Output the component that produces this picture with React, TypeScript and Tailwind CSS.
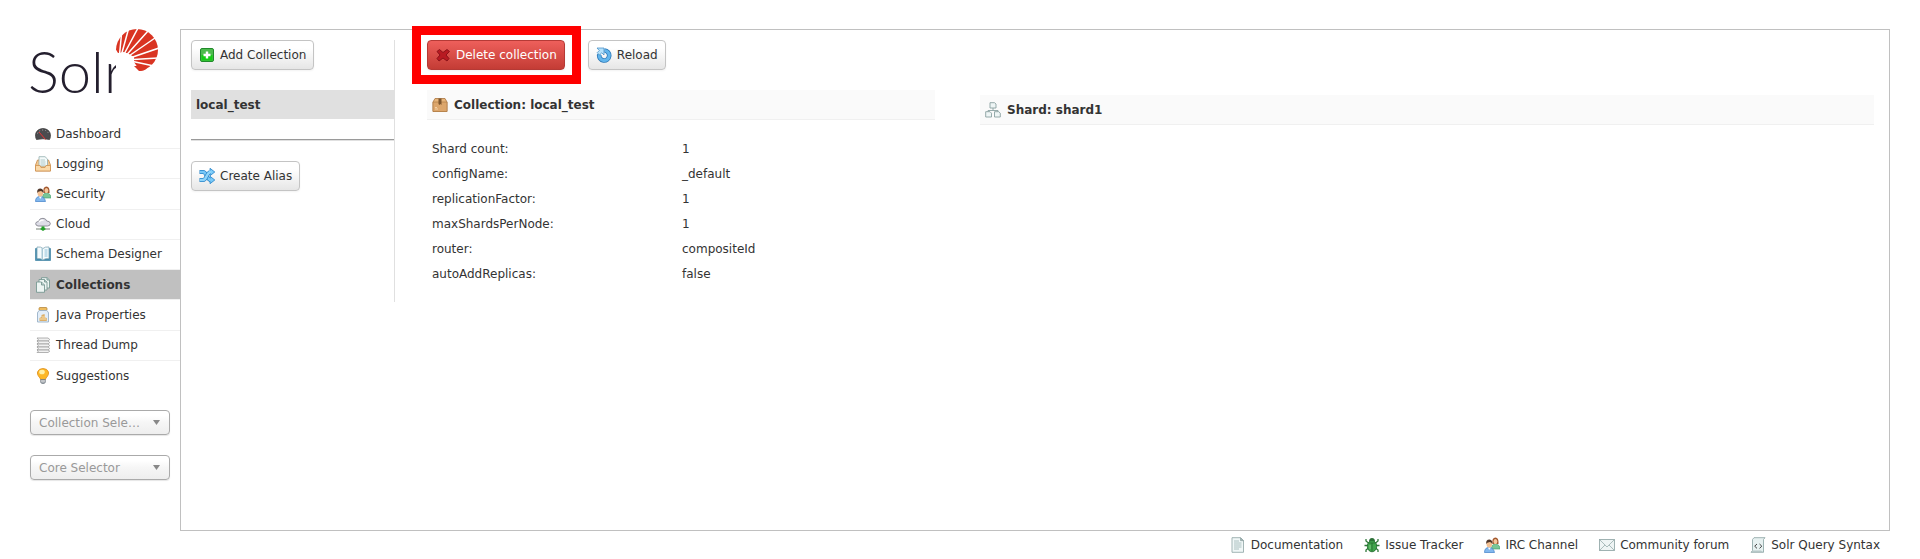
import React from "react";

type IconName =
  | "dashboard" | "logging" | "users" | "cloud" | "book" | "pages" | "jar" | "stack" | "bulb"
  | "plus" | "shuffle" | "cross" | "reload" | "box" | "nodes" | "doc" | "bug" | "mail" | "script";

const shapes: Record<IconName, React.ReactNode> = {
  dashboard: (
    <>
      <path d="M1.5 13.5C-.5 10 0 3 8 2.500C16 3 16.500 10 14.500 13.500Q8 12 1.500 13.500Z" fill="#4b4b4e" stroke="#333" strokeWidth=".7" />
      <path d="M2.500 7.500Q4 4 8 4T13.500 7.500" fill="none" stroke="#aaa" strokeWidth="1" strokeDasharray="1 2" />
      <path d="M4 6L10.500 13.500" stroke="#e33" strokeWidth="1" />
    </>
  ),
  logging: (
    <>
      <path d="M.500 9L2.500 4H13.500L15.500 9V15H.500Z" fill="#f3c78d" stroke="#c98c4c" strokeWidth=".8" />
      <path d="M4 .700H10L12.500 3V10H4Z" fill="#f4fafa" stroke="#92adad" strokeWidth=".8" />
      <path d="M5.500 4H10M5.500 6H10.500M5.500 8H10.500" stroke="#9fbcbc" strokeWidth=".8" />
      <path d="M.500 9.500H5L6 11.500H10L11 9.500H15.500V15H.500Z" fill="#fbd9a8" stroke="#cf9250" strokeWidth=".8" />
    </>
  ),
  users: (
    <>
      <path d="M7.500 12Q7.500 7 11.500 7Q16 7.500 16 12Z" fill="#79c698" stroke="#3d9c66" strokeWidth=".6" />
      <path d="M8.500 7Q7.500 .500 11.500 .500Q15 .500 14.500 7Z" fill="#a3582f" />
      <ellipse cx="11.400" cy="4.600" rx="1.900" ry="2.600" fill="#f6c79c" />
      <path d="M.500 15.500Q.500 10.500 5 10.500T10.500 15.500Z" fill="#82b8ee" stroke="#3f7fc9" strokeWidth=".7" />
      <path d="M4 10.500L5.200 13L6.800 10.500" fill="#fff" />
      <ellipse cx="5.300" cy="7" rx="2.800" ry="3.500" fill="#f4c092" />
      <path d="M2.300 7Q1.500 2.500 5.500 2.500Q9 3 8.300 7Q7 4.700 5 5.200Q3 5.500 2.300 7Z" fill="#4e3528" />
    </>
  ),
  cloud: (
    <>
      <path d="M3 10Q.500 9.500 .700 7.500Q1 5.500 3.500 5.500Q4.500 2 8 2.300Q11 2.500 11.700 5Q15 5 15.300 7.500Q15.300 10 12.500 10Z" fill="#dedee8" stroke="#85858f" strokeWidth=".9" />
      <path d="M4 6Q6 3.500 8.500 4.500" stroke="#fff" strokeWidth="1.300" fill="none" />
      <path d="M8 10V12M1 13H15" stroke="#a3aca3" strokeWidth="1.300" />
      <path d="M6.500 10.500H9.500V12L11 13L8 15L5 13L6.500 12Z" fill="#24a12a" />
    </>
  ),
  book: (
    <>
      <path d="M.500 2.500H2V13H14V2.500H15.500V14.500H.500Z" fill="#4b93b7" stroke="#2d7699" strokeWidth=".6" />
      <path d="M2 1Q6 .500 8 2.500Q10 .500 14 1V12.500Q10 12 8 14Q6 12 2 12.500Z" fill="#f5fbfd" stroke="#7fa6b5" strokeWidth=".8" />
      <path d="M6.500 2L8 3V13.500L6.500 12.500Z" fill="#a8c8d6" />
      <path d="M9.500 4H12.500M9.500 6H12.500M9.500 8H12.500M9.500 10H12.500" stroke="#8cc0d9" strokeWidth="1" />
    </>
  ),
  pages: (
    <g fill="#edf5f3" stroke="#789993" strokeWidth=".9">
      <path d="M6.500 .700H12L14.500 3V11H6.500Z" />
      <path d="M4 2.500H9.500L12 5V13H4Z" />
      <path d="M1.500 5H6.500L9.500 8V15.300H1.500Z" />
      <path d="M6.500 5V8H9.500M9.500 2.500V5H12M12 .700V3H14.500" fill="#b9cfcb" />
    </g>
  ),
  jar: (
    <>
      <rect x="4" y=".500" width="8" height="3" rx="1" fill="#eebc5e" stroke="#ad7d30" strokeWidth=".7" />
      <path d="M4.500 3.500H11.500Q13.500 4.500 13.500 6V15H2.500V6Q2.500 4.500 4.500 3.500Z" fill="#e3eef9" stroke="#98b1c7" strokeWidth=".9" />
      <path d="M4.500 14V11L6.500 10V8L9.500 7L10 10.500L11.800 11V14Z" fill="#dcae67" />
      <path d="M5 12H11M7 10H10" stroke="#fae0ad" strokeWidth="1" />
    </>
  ),
  stack: (
    <g fill="#f1f1f1" stroke="#a0a0a0" strokeWidth=".8">
      <path d="M2 1H13L14.800 2.500L13 4H2L3.300 2.500Z" />
      <path d="M2 4H13L14.800 5.500L13 7H2L3.300 5.500Z" />
      <path d="M2 7H13L14.800 8.500L13 10H2L3.300 8.500Z" />
      <path d="M2 10H13L14.800 11.500L13 13H2L3.300 11.500Z" />
      <path d="M2 13H13L14.800 14.200L13 15.500H2L3.300 14.200Z" />
    </g>
  ),
  bulb: (
    <>
      <path d="M5.500 11.500Q5.500 10 3.700 8.500Q2 6.500 2.500 4Q3.700 .500 8 .500T13.500 4Q14 6.500 12.300 8.500Q10.500 10 10.500 11.500Z" fill="#fdb827" stroke="#dd8b17" strokeWidth=".8" />
      <ellipse cx="7" cy="4" rx="2.800" ry="2.300" fill="#fff0a8" />
      <path d="M5.700 11.500H10.300V14.500L9 15.500H7L5.700 14.500Z" fill="#a7adb3" stroke="#6e7780" strokeWidth=".7" />
      <path d="M6 13H10" stroke="#eee" strokeWidth=".8" />
    </>
  ),
  plus: (
    <>
      <rect x="1.500" y="1.500" width="13" height="13" rx="1.500" fill="#4dbb4d" stroke="#218a2b" />
      <path d="M2.500 8H13.500V13.500H2.500Z" fill="#16cb16" />
      <path d="M8 4.500V11.500M4.500 8H11.500" stroke="#fff" strokeWidth="2.400" />
    </>
  ),
  shuffle: (
    <>
      <path d="M.500 4H4Q6 4 7.500 7.500T11 12H12" fill="none" stroke="#2783c8" strokeWidth="4" />
      <path d="M11 .300L15.800 4L11 7.700ZM11 8.300L15.800 12L11 15.700Z" fill="#79caf8" stroke="#2783c8" strokeWidth=".8" />
      <path d="M1 4H4Q6 4 7.500 7.500T11 12H12.500" fill="none" stroke="#77c7f7" strokeWidth="2.600" />
      <path d="M.500 12H4Q6 12 7.500 8.500T11 4" fill="none" stroke="#2783c8" strokeWidth="4" />
      <path d="M1 12H4Q6 12 7.500 8.500T11 4H12.500" fill="none" stroke="#8ed4fa" strokeWidth="2.600" />
    </>
  ),
  cross: (
    <path d="M2 4.500L4.500 2.500L8 5.500L12 2.500L14.500 4.500L11 8L14 11.500L12 14L8 11L4 14L2 11.500L5 8Z" fill="#b81a22" stroke="#8c1219" strokeWidth="1" strokeLinejoin="round" />
  ),
  reload: (
    <>
      <path d="M8.500 3.500A5 5 0 1 1 3.300 7.500" fill="none" stroke="#2c78b7" strokeWidth="4.600" />
      <path d="M8.500 3.500A5 5 0 1 1 3.300 7.500" fill="none" stroke="#62b5ec" strokeWidth="3" />
      <path d="M1 1H8V8L5.800 5.800L3.500 8L1.200 5.700L3.300 3.500Z" fill="#b5e1fa" stroke="#3986c3" strokeWidth=".7" />
    </>
  ),
  box: (
    <>
      <path d="M3 1.500H13L15 5V14.500H1V5Z" fill="#e7b57b" stroke="#a97540" strokeWidth=".8" />
      <path d="M1 5H15V14.500H1Z" fill="#dca66c" stroke="#b07b45" strokeWidth=".7" />
      <path d="M6.500 1.500H9.500V8L8.500 7L7.500 8L6.500 7Z" fill="#7d562f" />
      <path d="M3 12H6M3 10.500H5" stroke="#f6d5ab" strokeWidth=".9" />
    </>
  ),
  nodes: (
    <g fill="#eef5f5" stroke="#8ba1a1" strokeWidth=".9">
      <path d="M8 6V8.500M3 11V8.500H13V11" fill="none" />
      <path d="M5 .700H9.500L11 2V6H5ZM.700 9.700H5L6.500 11.200V15H.700ZM9.500 9.700H13.700L15.300 11.200V15H9.500Z" />
    </g>
  ),
  doc: (
    <>
      <path d="M2 .700H10.500L13.500 3.700V15.300H2Z" fill="#f0f7f7" stroke="#99adad" strokeWidth=".9" />
      <path d="M10.500 .700V3.700H13.500Z" fill="#9fb5b5" stroke="#869c9c" strokeWidth=".6" />
      <path d="M4 4H9M4 6H11.500M4 8H11.500M4 10H11.500M4 12H9" stroke="#a3b9b9" strokeWidth=".9" />
    </>
  ),
  bug: (
    <>
      <path d="M4.500 6L2 4V2M11.500 6L14 4V2M4 8.500H.500M12 8.500H15.500M4.500 11L2 13V15M11.500 11L14 13V15" fill="none" stroke="#31793b" strokeWidth="1.300" />
      <path d="M5 4.500Q5 1 8 1T11 4.500Z" fill="#2d7138" />
      <ellipse cx="8" cy="9.200" rx="4.700" ry="5.600" fill="#41a54d" stroke="#246b30" strokeWidth=".8" />
      <path d="M4.500 6H11.500M8 6V14.500" stroke="#23692e" strokeWidth=".8" />
      <path d="M6 8V12" stroke="#85ce86" strokeWidth="1" />
    </>
  ),
  mail: (
    <>
      <rect x=".500" y="2.500" width="15" height="11" fill="#eef4f4" stroke="#95aaaa" strokeWidth=".9" />
      <path d="M1 3L8 10L15 3M1 13L6 8M15 13L10 8" fill="none" stroke="#a2b6b6" strokeWidth=".9" />
    </>
  ),
  script: (
    <>
      <path d="M4 .700H15L13.500 2.500V15.300H1L2.500 13.500V2.500Z" fill="#e7f1f1" stroke="#93aaaa" strokeWidth=".9" />
      <path d="M1 15.300L2.500 13.500H11L13.500 15.300Z" fill="#b6c8c8" />
      <path d="M7 7L4.700 9.200L7 11.400M9.500 7L11.800 9.200L9.500 11.400" fill="none" stroke="#444" strokeWidth="1" />
    </>
  ),
};

function Icon({ name }: { name: IconName }) {
  return (
    <svg viewBox="0 0 16 16" className="size-4 shrink-0" aria-hidden="true">
      {shapes[name]}
    </svg>
  );
}

function Logo() {
  return (
    <a href="#/" className="relative block h-[90px] text-[58px] leading-[84px] text-[#241f2e]">
      <span className="-ml-[2px] block font-['Lato'] font-light">Solr</span>
      <svg viewBox="0 0 42 44" className="absolute top-0 left-[86px] h-11 w-[42px]" aria-hidden="true">
        <circle cx="21" cy="21" r="21" fill="#d93422" />
        <path
          d="M3 31L5.500 5M4 31L12.500 0M5 31L22 -1M6 31L32 2M7 31L39 9M8 31L43 19M9 31L43 29M10 31L38 37"
          fill="none"
          stroke="#fff"
          strokeWidth="1.500"
        />
        <path d="M-1 19L2 24L8 23L13 25L18 28L18 33L22 39L24 44H-1Z" fill="#fff" />
        <path d="M18 37L24 37L31 39.500Q27 42.500 23 42Z" fill="#d93422" />
      </svg>
    </a>
  );
}

const nav: [string, IconName][] = [
  ["Dashboard", "dashboard"],
  ["Logging", "logging"],
  ["Security", "users"],
  ["Cloud", "cloud"],
  ["Schema Designer", "book"],
  ["Collections", "pages"],
  ["Java Properties", "jar"],
  ["Thread Dump", "stack"],
  ["Suggestions", "bulb"],
];

const details = [
  ["Shard count:", "1"],
  ["configName:", "_default"],
  ["replicationFactor:", "1"],
  ["maxShardsPerNode:", "1"],
  ["router:", "compositeId"],
  ["autoAddReplicas:", "false"],
];

const footer: [string, IconName][] = [
  ["Documentation", "doc"],
  ["Issue Tracker", "bug"],
  ["IRC Channel", "users"],
  ["Community forum", "mail"],
  ["Solr Query Syntax", "script"],
];

function Button({ icon, danger, children }: { icon: IconName; danger?: boolean; children: React.ReactNode }) {
  const tone = danger
    ? "border-[#b53a36] bg-linear-to-b from-[#ee5f5b] to-[#c43c35] text-white"
    : "border-[#c4c4c4] bg-linear-to-b from-white from-25% to-[#e6e6e6] text-[#333]";
  return (
    <button className={`flex h-[30px] items-center gap-[5px] rounded-[4px] border px-[7px] whitespace-nowrap shadow-[0_1px_2px_rgba(0,0,0,0.05)] ${tone}`}>
      <Icon name={icon} />
      {children}
    </button>
  );
}

function Selector({ label }: { label: string }) {
  return (
    <div className="relative">
      <select
        aria-label={label}
        className="block h-[25px] w-full appearance-none truncate rounded-[4px] border border-[#aaa] bg-linear-to-b from-white from-20% via-[#f6f6f6] via-50% to-[#eee] pr-[25px] pl-2 text-[#999] shadow-[0_1px_1px_rgba(0,0,0,0.1)]"
      >
        <option>{label}</option>
      </select>
      <svg viewBox="0 0 7 5" className="pointer-events-none absolute top-[10px] right-[10px] h-[5px] w-[7px]" aria-hidden="true">
        <path d="M0 0H7L3.500 5Z" fill="#888" />
      </svg>
    </div>
  );
}

function Heading({ icon, children }: { icon: IconName; children: React.ReactNode }) {
  return (
    <h2 className="flex h-[30px] items-center gap-[6px] border-b border-[#f0f0f0] bg-[#fafafa] px-[5px] font-bold">
      <Icon name={icon} />
      {children}
    </h2>
  );
}

export default function App() {
  return (
    <div className="bg-white pt-[29px] pr-[30px] pl-[30px] font-['DejaVu_Sans',Verdana,sans-serif] text-[12px] leading-[18px] text-[#333]">
      <div className="flex">
        <aside className="w-[150px] shrink-0">
          <Logo />
          <nav>
            <ul className="grid min-h-[272px] auto-rows-fr">
              {nav.map(([label, icon]) => (
                <li key={label} className="border-b border-[#f0f0f0] last:border-b-0">
                  <a
                    href="#/"
                    className={`flex h-full items-center gap-[5px] pl-[5px] whitespace-nowrap ${label === "Collections" ? "bg-[#c0c0c0] font-bold" : ""}`}
                  >
                    <Icon name={icon} />
                    {label}
                  </a>
                </li>
              ))}
            </ul>
          </nav>
          <div className="mt-[19px] mr-[10px] flex flex-col gap-5">
            <Selector label="Collection Selector" />
            <Selector label="Core Selector" />
          </div>
        </aside>

        <main className="flex min-h-[502px] min-w-0 flex-1 items-start border border-[#c0c0c0] pt-[10px] pr-[15px] pb-[10px] pl-[10px]">
          <section className="min-h-[262px] w-[204px] shrink-0 border-r border-[#e0e0e0]">
            <div className="flex">
              <Button icon="plus">Add Collection</Button>
            </div>
            <a href="#/" className="mt-5 flex h-[29px] items-center bg-[#e0e0e0] px-[5px] font-bold">local_test</a>
            <hr className="mt-5 border-t border-b border-t-[#9a9a9a] border-b-[#e0e0e0]" />
            <div className="mt-5 flex">
              <Button icon="shuffle">Create Alias</Button>
            </div>
          </section>

          <div className="ml-8 min-w-0 flex-1">
            <div className="flex gap-[23px]">
              <div className="relative">
                <Button icon="cross" danger>Delete collection</Button>
                <div className="pointer-events-none absolute -top-[14px] -right-4 -bottom-[14px] -left-[15px] border-[9px] border-[#f00]" />
              </div>
              <Button icon="reload">Reload</Button>
            </div>
            <div className="mt-5 grid grid-cols-[508fr_894fr] gap-[45px]">
              <section>
                <Heading icon="box">Collection: local_test</Heading>
                <table className="mt-4 ml-[5px] w-full table-fixed text-left">
                  <tbody>
                    {details.map(([k, v]) => (
                      <tr key={k} className="h-[25px]">
                        <th scope="row" className="w-[250px] p-0 font-normal">{k}</th>
                        <td className="p-0">{v}</td>
                      </tr>
                    ))}
                  </tbody>
                </table>
              </section>
              <section className="mt-[5px]">
                <Heading icon="nodes">Shard: shard1</Heading>
              </section>
            </div>
          </div>
        </main>
      </div>

      <footer className="mt-[5px] flex justify-end gap-[21px] pr-[10px]">
        {footer.map(([label, icon]) => (
          <a key={label} href="#/" className="flex items-center gap-[5px] whitespace-nowrap">
            <Icon name={icon} />
            {label}
          </a>
        ))}
      </footer>
    </div>
  );
}
